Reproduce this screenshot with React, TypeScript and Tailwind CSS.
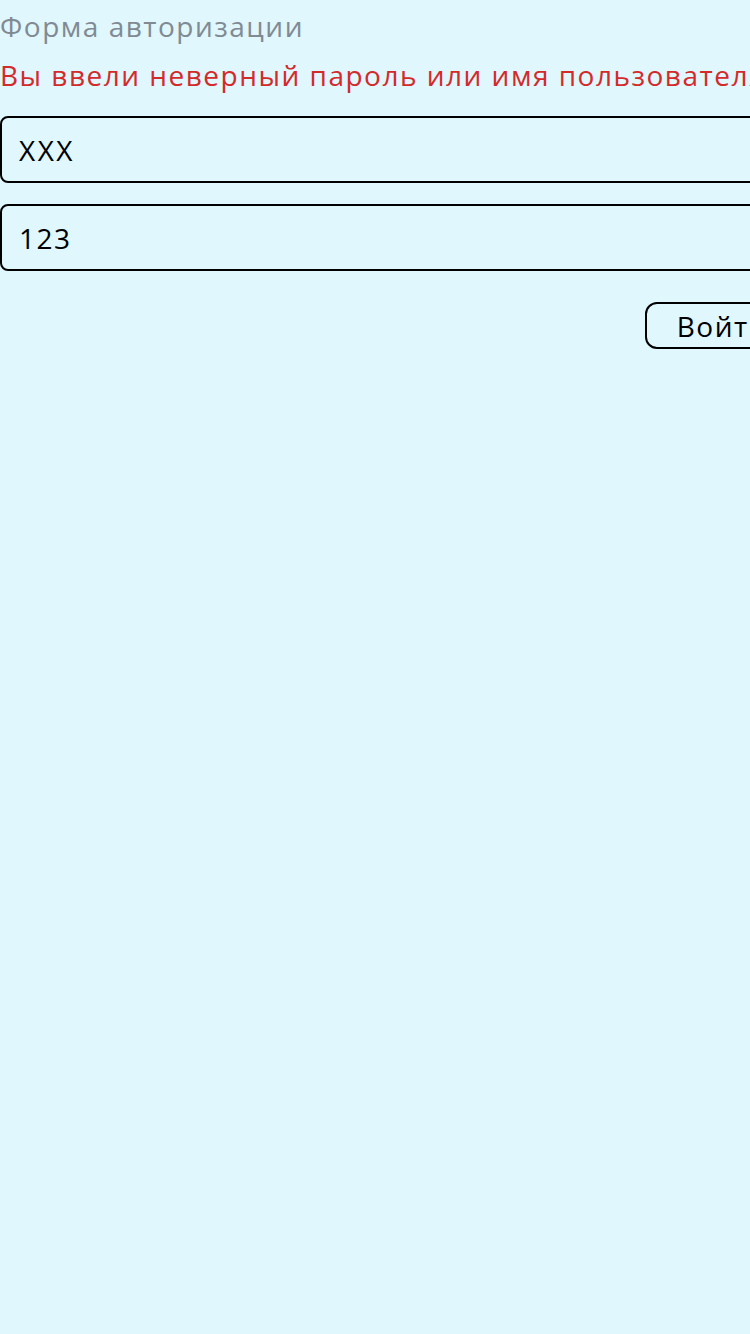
import React from "react";

export default function App() {
  return (
    <div className="min-h-[1334px] w-[800px] bg-[#e0f7fe] font-['Open_Sans',sans-serif] tracking-[1.5px]">
      <div className="flex flex-col">
        <h1 className="m-0 h-[50px] pt-[6px] text-[28px] leading-[40px] font-normal text-[#808a93]">Форма авторизации</h1>
        <p className="m-0 h-[66px] pt-[5px] text-[28px] leading-[40px] text-[#d32a2a] whitespace-nowrap">
          Вы ввели неверный пароль или имя пользователя
        </p>
        <div className="flex flex-col gap-[21px]">
          <div className="flex h-[67px] items-center rounded-[8px] border-2 border-black px-[17px] text-[28px] text-black tracking-[2.5px]">XXX</div>
          <div className="flex h-[67px] items-center rounded-[8px] border-2 border-black px-[17px] text-[28px] text-black tracking-[1.5px]">123</div>
        </div>
        <div className="flex justify-end pt-[31px]">
          <button className="flex h-[47px] items-center rounded-[12px] border-2 border-black px-[30px] text-[28px] text-black whitespace-nowrap">Войти</button>
        </div>
      </div>
    </div>
  );
}
